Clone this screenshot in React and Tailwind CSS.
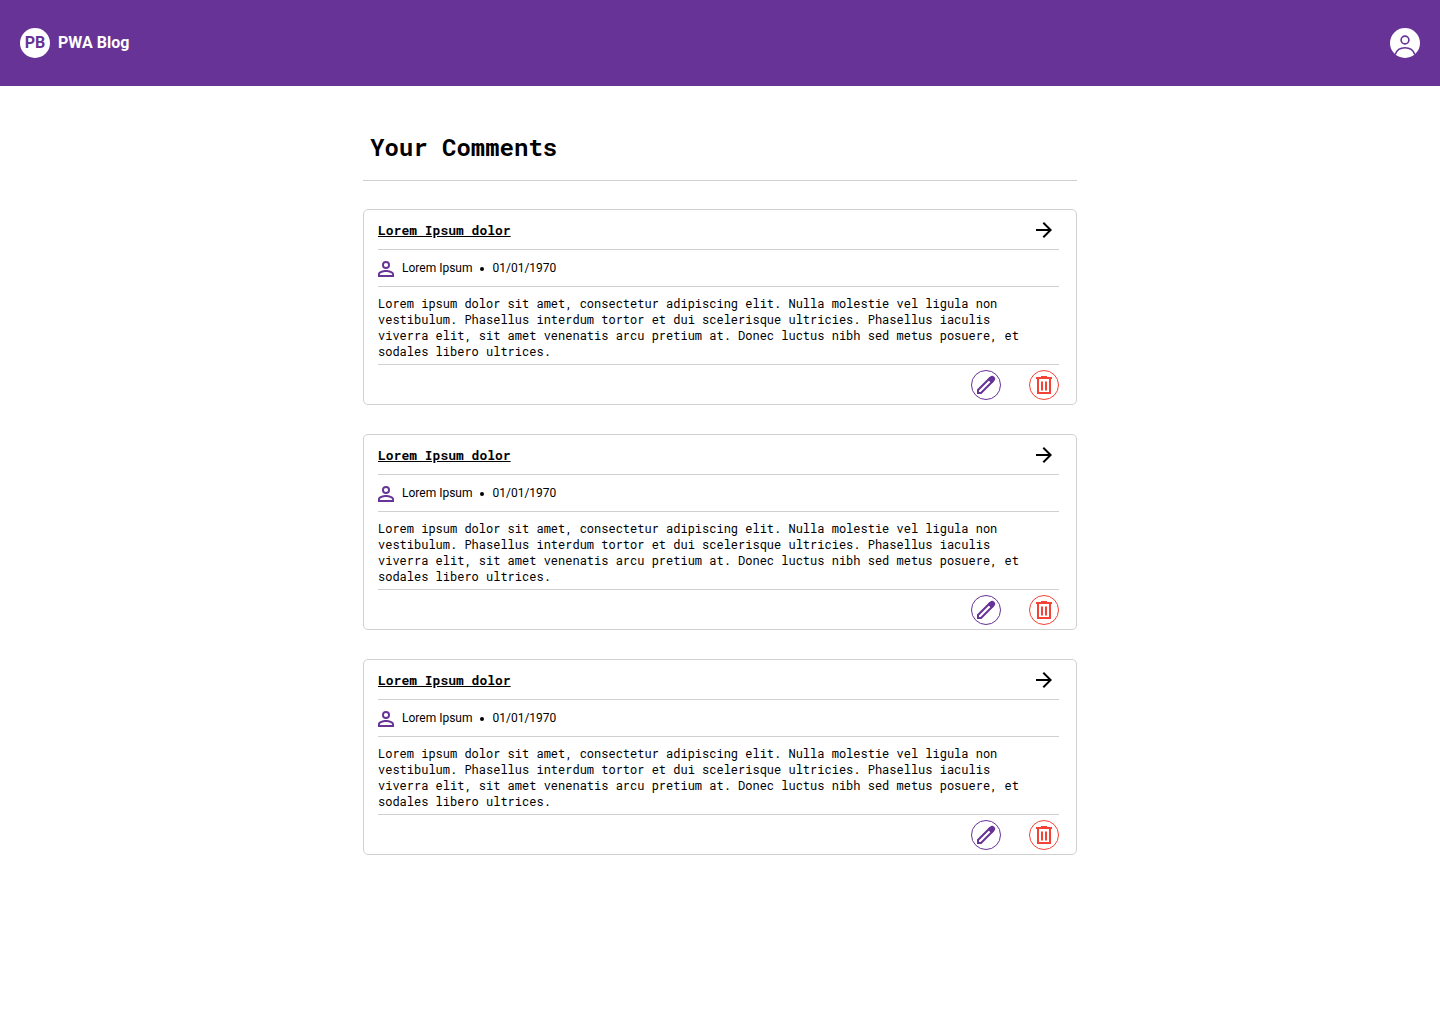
const comments = [1, 2, 3].map((id) => ({
  id,
  title: "Lorem Ipsum dolor",
  author: "Lorem Ipsum",
  date: "01/01/1970",
  body: "Lorem ipsum dolor sit amet, consectetur adipiscing elit. Nulla molestie vel ligula non vestibulum. Phasellus interdum tortor et dui scelerisque ultricies. Phasellus iaculis viverra elit, sit amet venenatis arcu pretium at. Donec luctus nibh sed metus posuere, et sodales libero ultrices.",
}));

function AccountIcon() {
  return (
    <svg viewBox="0 0 30 30" className="size-[30px]" aria-hidden="true">
      <circle cx="15" cy="15" r="15" fill="#fff" />
      <g fill="none" stroke="#673396" strokeWidth="1.6">
        <circle cx="15" cy="12" r="3.900" />
        <path d="M5.200 26.600C6.600 22.300 10.500 19.800 15 19.800s8.400 2.500 9.800 6.800" />
      </g>
    </svg>
  );
}

function PersonIcon() {
  return (
    <svg viewBox="4 4 16 16" className="size-4 shrink-0" fill="#673396" aria-hidden="true">
      <path d="M12 5.900a2.100 2.100 0 1 1 0 4.200 2.100 2.100 0 0 1 0-4.200m0 9c2.970 0 6.100 1.460 6.100 2.100v1.100H5.900V17c0-.640 3.130-2.100 6.100-2.100M12 4a4 4 0 1 0 0 8 4 4 0 0 0 0-8zm0 9c-2.670 0-8 1.340-8 4v3h16v-3c0-2.660-5.330-4-8-4z" />
    </svg>
  );
}

function ArrowIcon() {
  return (
    <svg viewBox="0 0 24 24" className="size-6" aria-hidden="true">
      <path d="M12 4l-1.410 1.410L16.170 11H4v2h12.170l-5.580 5.590L12 20l8-8z" />
    </svg>
  );
}

function PencilIcon() {
  return (
    <svg viewBox="0 0 24 24" className="size-6" aria-hidden="true">
      <path d="M4 20v-3L15.500 5.500l3 3L7 20z" fill="none" stroke="currentColor" strokeWidth="2" />
      <path d="M13.500 6.200L16 3.700a2.900 2.900 0 0 1 4.200 4.200L17.700 10.400z" fill="currentColor" />
    </svg>
  );
}

function TrashIcon() {
  return (
    <svg viewBox="0 0 24 24" className="size-6" aria-hidden="true">
      <g fill="none" stroke="currentColor" strokeWidth="2">
        <path d="M4 5h16M6 5v15h12V5M10 8.500v9M14 8.500v9" />
      </g>
      <path d="M9 3h6v2H9z" fill="currentColor" />
    </svg>
  );
}

function CommentCard({ comment }) {
  return (
    <article className="rounded-[5px] border border-[#d1d1d1] pr-[17px] pl-[14px]">
      <div className="flex h-10 items-center justify-between border-b border-[#d1d1d1]">
        <h2 className="font-['Roboto_Mono','DejaVu_Sans_Mono',monospace] text-[13px] leading-4 font-bold">
          <a href="#post" className="underline">{comment.title}</a>
        </h2>
        <a href="#post" aria-label="Open post" className="mr-[3px]">
          <ArrowIcon />
        </a>
      </div>
      <div className="flex h-[37px] items-end gap-2 border-b border-[#d1d1d1] pb-[9px] text-xs">
        <PersonIcon />
        <span className="flex items-center gap-2 pb-px">
          <span>{comment.author}</span>
          <span className="mt-0.5 size-1 rounded-full bg-black" />
          <time dateTime="1970-01-01">{comment.date}</time>
        </span>
      </div>
      <p className="border-b border-[#d1d1d1] pt-2 pr-4 pb-[5px] font-['Roboto_Mono','DejaVu_Sans_Mono',monospace] text-xs leading-4">
        {comment.body}
      </p>
      <div className="flex h-[39px] items-center justify-end gap-7">
        <button type="button" aria-label="Edit comment" className="flex size-[30px] items-center justify-center rounded-full border border-[#673396] text-[#673396]">
          <PencilIcon />
        </button>
        <button type="button" aria-label="Delete comment" className="flex size-[30px] items-center justify-center rounded-full border border-[#f44336] text-[#f44336]">
          <TrashIcon />
        </button>
      </div>
    </article>
  );
}

export default function App() {
  return (
    <div className="min-h-screen bg-white font-['Roboto',sans-serif] text-black">
      <header className="flex h-[86px] items-center justify-between bg-[#673396] px-5">
        <a href="#home" className="flex items-center gap-2 text-base font-bold text-white">
          <span className="flex size-[30px] items-center justify-center rounded-full bg-white text-[#673396]">PB</span>
          <span>PWA Blog</span>
        </a>
        <button type="button" aria-label="Account">
          <AccountIcon />
        </button>
      </header>
      <main className="mx-auto max-w-[714px] pt-[45px]">
        <h1 className="border-b border-[#d1d1d1] px-[7px] pb-[17px] font-['Roboto_Mono','DejaVu_Sans_Mono',monospace] text-2xl font-bold">
          Your Comments
        </h1>
        <div className="mt-7 flex flex-col gap-[29px]">
          {comments.map((comment) => (
            <CommentCard key={comment.id} comment={comment} />
          ))}
        </div>
      </main>
    </div>
  );
}
